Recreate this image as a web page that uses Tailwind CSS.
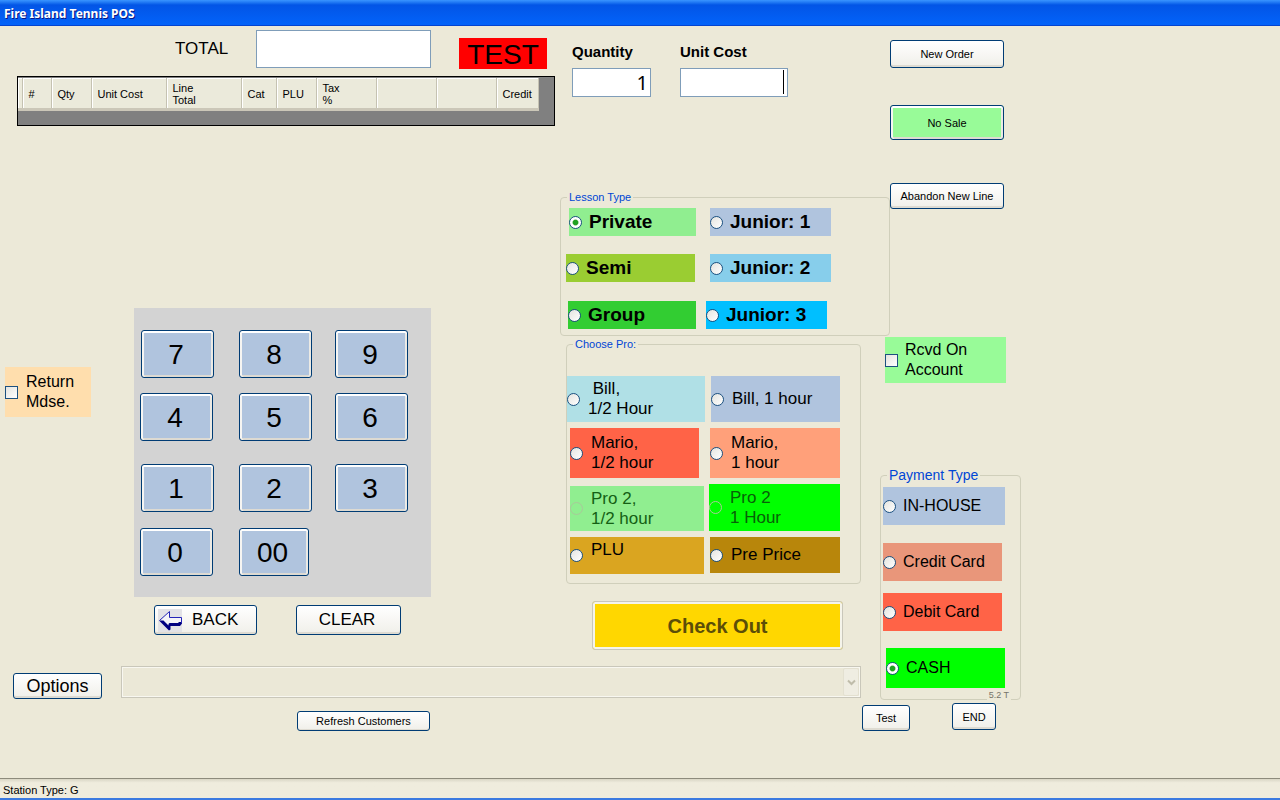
<!DOCTYPE html>
<html lang="en">
<head>
<meta charset="utf-8">
<meta name="viewport" content="width=device-width, initial-scale=1">
<title>Fire Island Tennis POS</title>
<script src="https://cdn.jsdelivr.net/npm/@tailwindcss/browser@4"></script>
</head>
<body class="flex min-h-screen flex-col bg-[#ece9d8] font-['Liberation_Sans',Arial,sans-serif] text-[11px] leading-[14px] text-black">

<header class="flex h-[26px] items-center bg-linear-to-b from-[#3a95ff] via-[#0355e6] via-20% to-[#0363fa] border-b border-[#0444d0] px-1 pt-0.5">
  <h1 class="font-['Noto_Sans','Open_Sans',sans-serif] text-[12px] font-bold text-white text-shadow-[1px_1px_0_#0a1883]">Fire Island Tennis POS</h1>
</header>

<main class="flex flex-1 items-start">
  <!-- Sale entry -->
  <div class="w-[862px] shrink-0">
    <div class="flex items-start">
      <section class="w-[560px] shrink-0">
        <div class="flex h-[50px] items-start pt-1 pl-[175px]">
          <label for="total" class="w-[81px] pt-[9px] text-[17px] leading-5">TOTAL</label>
          <input id="total" type="text" class="h-[38px] w-[175px] border border-[#7f9db9] bg-white px-1 text-right text-[20px]">
          <div class="mt-2 ml-7 flex h-[31px] w-[88px] items-center justify-center bg-[#ff0000] pt-0.5 text-[28px] leading-8">TEST</div>
        </div>

        <div class="ml-[17px] h-[50px] w-[538px] border border-black bg-[#808080] pt-px">
          <table class="w-[520px] table-fixed border-collapse bg-[#ebeadb]">
            <colgroup>
              <col class="w-[4px]"><col class="w-[29px]"><col class="w-[40px]"><col class="w-[75px]"><col class="w-[75px]"><col class="w-[35px]"><col class="w-[40px]"><col class="w-[60px]"><col class="w-[60px]"><col class="w-[60px]"><col class="w-[42px]">
            </colgroup>
            <thead>
              <tr class="h-[31px] border-t border-b-3 border-t-white border-b-[#cbc7b8] text-left leading-3 *:border-r *:border-r-[#c5c2b2] *:pl-1.5 *:font-normal *:shadow-[inset_1px_0_0_#fff]">
                <td></td><th scope="col">#</th><th scope="col">Qty</th><th scope="col">Unit Cost</th><th scope="col">Line<br>Total</th><th scope="col">Cat</th><th scope="col">PLU</th><th scope="col">Tax<br>%</th><td></td><td></td><th scope="col">Credit</th>
              </tr>
            </thead>
          </table>
        </div>

        <div class="mt-[182px] flex items-start">
          <label class="mt-[59px] ml-[5px] flex h-[50px] w-[86px] items-center gap-2 bg-[#ffdead] text-[16px] leading-5">
            <input type="checkbox" class="size-[13px] shrink-0 appearance-none border border-[#1c5180] bg-linear-to-br from-[#e4e4df] to-white">
            <span>Return<br>Mdse.</span>
          </label>
          <div class="ml-[43px] h-[289px] w-[297px] bg-[#d3d3d3] pt-[22px] text-[28px] [&_button]:h-[48px] [&_button]:rounded-[3px] [&_button]:border [&_button]:border-[#003c74] [&_button]:bg-[#b0c4de] [&_button]:pt-0.5 [&_button]:pr-[3px] [&_button]:shadow-[inset_0_2px_0_#fff,inset_2px_0_0_#f6f5f2,inset_-2px_0_0_#eceae4,inset_0_-2px_0_#dddad2]">
            <div class="flex pl-[7px]">
              <button type="button" class="w-[73px]">7</button><button type="button" class="ml-[25px] w-[73px]">8</button><button type="button" class="ml-[23px] w-[73px]">9</button>
            </div>
            <div class="mt-[15px] flex pl-[6px]">
              <button type="button" class="w-[73px]">4</button><button type="button" class="ml-[26px] w-[73px]">5</button><button type="button" class="ml-[23px] w-[73px]">6</button>
            </div>
            <div class="mt-[23px] flex pl-[7px]">
              <button type="button" class="w-[73px]">1</button><button type="button" class="ml-[25px] w-[73px]">2</button><button type="button" class="ml-[23px] w-[73px]">3</button>
            </div>
            <div class="mt-4 flex pl-[6px]">
              <button type="button" class="w-[73px]">0</button><button type="button" class="ml-[26px] w-[70px]">00</button>
            </div>
          </div>
        </div>

        <div class="mt-2 flex pl-[154px] text-[17px] leading-5">
          <button type="button" class="flex h-[30px] w-[103px] items-center gap-2.5 rounded-[3px] border border-[#003c74] bg-linear-to-b from-white to-[#f0efe9] pl-[3px] shadow-[inset_0_-2px_0_#dedbd2]">
            <svg class="h-[23px] w-6 shrink-0" viewBox="0 0 24 23" aria-hidden="true">
              <path fill="#e2e2e6" d="M0 0h24v23H0z"/>
              <path fill="#f4f4f8" d="M1.500 12 11.500 2v6.500h12V15h-12v5.500z"/>
              <path fill="#000080" d="M1 11.500 11 21.500l1.500-1V17H22l2-2.500V13h-3l-1 1h-8.500l-1 1v1.500L5.500 11.500z"/>
              <path fill="none" stroke="#2424b8" d="M1.500 11.500 11.500 2.500v6h12V14"/>
            </svg>
            BACK
          </button>
          <button type="button" class="ml-[39px] h-[30px] w-[105px] rounded-[3px] border border-[#003c74] bg-linear-to-b from-white to-[#f0efe9] pr-[3px] shadow-[inset_0_-2px_0_#dedbd2]">CLEAR</button>
        </div>
      </section>

      <section class="-mr-[28px] w-[330px] shrink-0">
        <div class="flex pt-4 pl-3 text-[15px] leading-5">
          <div class="w-[108px]">
            <label for="qty" class="block h-[26px] font-bold">Quantity</label>
            <input id="qty" type="text" value="1" class="h-[29px] w-[79px] border border-[#7f9db9] bg-white px-0.5 text-right font-['Noto_Sans',sans-serif] text-[20px]">
          </div>
          <div>
            <label for="cost" class="block h-[26px] font-bold">Unit Cost</label>
            <div class="relative">
              <input id="cost" type="text" class="block h-[29px] w-[108px] border border-[#7f9db9] bg-white px-1 text-right text-[18px]">
              <span class="absolute top-0.5 right-1 h-6 w-px bg-black"></span>
            </div>
          </div>
        </div>

        <fieldset class="mt-[93px] h-[146px] rounded-[4px] border border-[#d0cfbb] text-[19px] font-bold leading-6 [&_input]:size-[13px] [&_input]:shrink-0 [&_input]:appearance-none [&_input]:rounded-full [&_input]:border [&_input]:border-[#1c5180] [&_input]:bg-linear-to-br [&_input]:from-[#e4e4df] [&_input]:to-white [&_label]:flex [&_label]:h-7 [&_label]:items-center [&_label]:gap-[7px]">
          <legend class="ml-1.5 px-0.5 text-[11px] font-normal leading-[14px] text-[#0046d5]">Lesson Type</legend>
          <div class="mt-1 flex pl-2">
            <label class="w-[127px] bg-[#90ee90]"><input type="radio" name="lesson" checked class="checked:bg-radial checked:from-[#21a121] checked:from-30% checked:to-white checked:to-45%">Private</label>
            <label class="ml-3.5 w-[121px] bg-[#b0c4de]"><input type="radio" name="lesson">Junior: 1</label>
          </div>
          <div class="mt-[18px] flex pl-[5px]">
            <label class="w-[129px] bg-[#9acd32]"><input type="radio" name="lesson">Semi</label>
            <label class="ml-[15px] w-[121px] bg-[#87ceeb]"><input type="radio" name="lesson">Junior: 2</label>
          </div>
          <div class="mt-[19px] flex pl-[7px]">
            <label class="w-[128px] bg-[#32cd32]"><input type="radio" name="lesson">Group</label>
            <label class="ml-2.5 w-[121px] bg-[#00bfff]"><input type="radio" name="lesson">Junior: 3</label>
          </div>
        </fieldset>

        <fieldset class="mt-px ml-1.5 h-[247px] w-[295px] rounded-[4px] border border-[#d0cfbb] text-[17px] leading-5 [&_input]:size-[13px] [&_input]:shrink-0 [&_input]:appearance-none [&_input]:rounded-full [&_input]:border [&_input]:border-[#1c5180] [&_input]:bg-linear-to-br [&_input]:from-[#e4e4df] [&_input]:to-white [&_label]:flex [&_label]:items-center [&_label]:gap-2">
          <legend class="ml-1.5 px-0.5 text-[11px] leading-[14px] text-[#0046d5]">Choose Pro:</legend>
          <div class="mt-[25px] flex">
            <label class="h-[46px] w-[138px] bg-[#b0e0e6]"><input type="radio" name="pro"><span>&nbsp;Bill,<br>1/2 Hour</span></label>
            <label class="ml-1.5 h-[46px] w-[129px] bg-[#b0c4de]"><input type="radio" name="pro">Bill, 1 hour</label>
          </div>
          <div class="mt-1.5 flex pl-[3px]">
            <label class="h-[50px] w-[129px] bg-[#ff6347]"><input type="radio" name="pro"><span>Mario,<br>1/2 hour</span></label>
            <label class="ml-[11px] h-[50px] w-[130px] bg-[#ffa07a]"><input type="radio" name="pro"><span>Mario,<br>1 hour</span></label>
          </div>
          <div class="mt-1.5 flex items-end pl-[3px] [&_input:disabled]:border-[#a9c99a] [&_input:disabled]:bg-none">
            <label class="h-[45px] w-[134px] bg-[#90ee90] text-[#146014]"><input type="radio" name="pro" disabled><span>Pro 2,<br>1/2 hour</span></label>
            <label class="ml-[5px] h-[47px] w-[131px] bg-[#00ff00] text-[#086008]"><input type="radio" name="pro" disabled><span>Pro 2<br>1 Hour</span></label>
          </div>
          <div class="mt-1.5 flex pl-[3px]">
            <label class="h-[37px] w-[134px] bg-[#daa520]"><input type="radio" name="pro"><span class="self-start pt-[3px]">PLU</span></label>
            <label class="ml-1.5 h-9 w-[130px] bg-[#b8860b]"><input type="radio" name="pro">Pre Price</label>
          </div>
        </fieldset>

        <button type="button" class="mt-[17px] ml-8 h-[49px] w-[251px] rounded-[3px] border border-[#c9c7ba] bg-[#ffd700] text-[20px] font-bold text-[#5c4e08] shadow-[inset_0_0_0_2px_#f5f4ea]">Check Out</button>
      </section>
    </div>

    <div class="mt-4 flex items-start">
      <button type="button" class="mt-[7px] ml-[13px] h-[26px] w-[89px] rounded-[3px] border border-[#003c74] bg-linear-to-b from-white to-[#f0efe9] text-[18px] leading-5 shadow-[inset_0_-2px_0_#dedbd2]">Options</button>
      <div class="relative ml-[19px] w-[740px]">
        <select disabled aria-label="Customer" class="block h-[32px] w-full appearance-none border border-[#c9c7ba] bg-[#ebe8d7] shadow-[inset_0_0_0_1px_#f8f7f0]"><option></option></select>
        <span class="pointer-events-none absolute top-0.5 right-0.5 bottom-0.5 flex w-4 items-center justify-center rounded-[2px] border border-[#e3e0d0] bg-[#efede2]">
          <svg class="h-[7px] w-[9px]" viewBox="0 0 9 7" aria-hidden="true"><path d="m1 1.500 3.500 3.500L8 1.500" fill="none" stroke="#bfbcaa" stroke-width="2"/></svg>
        </span>
      </div>
    </div>
    <button type="button" class="mt-3 ml-[297px] block h-5 w-[133px] rounded-[3px] border border-[#003c74] bg-linear-to-b from-white to-[#f0efe9] shadow-[inset_0_-1px_0_#dedbd2]">Refresh Customers</button>
  </div>

  <!-- Order actions and payment -->
  <aside class="w-[160px] shrink-0 pt-3.5">
    <div class="ml-7 flex w-[114px] flex-col [&_button]:rounded-[3px] [&_button]:border [&_button]:border-[#003c74]">
      <button type="button" class="h-7 bg-linear-to-b from-white to-[#f0efe9] shadow-[inset_0_-2px_0_#dedbd2]">New Order</button>
      <button type="button" class="mt-[37px] h-[35px] bg-[#98fb98] shadow-[inset_0_2px_0_#fff,inset_2px_0_0_#f6f5f2,inset_-2px_0_0_#eceae4,inset_0_-2px_0_#dddad2]">No Sale</button>
      <button type="button" class="mt-[43px] h-[26px] bg-linear-to-b from-white to-[#f0efe9] shadow-[inset_0_-2px_0_#dedbd2]">Abandon New Line</button>
    </div>

    <label class="mt-32 ml-[23px] flex h-[46px] w-[121px] items-center gap-[7px] bg-[#98fb98] text-[16px] leading-5">
      <input type="checkbox" class="size-[13px] shrink-0 appearance-none border border-[#1c5180] bg-linear-to-br from-[#e4e4df] to-white">
      <span>Rcvd On<br>Account</span>
    </label>

    <div class="relative mt-[84px] ml-[18px] w-[141px]">
      <fieldset class="h-[233px] rounded-[4px] border border-[#d0cfbb] text-[16px] leading-5 [&_input]:size-[13px] [&_input]:shrink-0 [&_input]:appearance-none [&_input]:rounded-full [&_input]:border [&_input]:border-[#1c5180] [&_input]:bg-linear-to-br [&_input]:from-[#e4e4df] [&_input]:to-white [&_label]:flex [&_label]:items-center [&_label]:gap-[7px]">
        <legend class="ml-1.5 px-0.5 text-[14px] leading-4 text-[#0046d5]">Payment Type</legend>
        <div class="flex flex-col pt-1 pl-0.5">
          <label class="h-[38px] w-[122px] bg-[#b0c4de]"><input type="radio" name="pay">IN-HOUSE</label>
          <label class="mt-[18px] h-[38px] w-[119px] bg-[#e9967a]"><input type="radio" name="pay">Credit Card</label>
          <label class="mt-3 h-[38px] w-[119px] bg-[#ff6347]"><input type="radio" name="pay">Debit Card</label>
          <label class="mt-[17px] ml-[3px] h-10 w-[119px] bg-[#00ff00]"><input type="radio" name="pay" checked class="checked:bg-radial checked:from-[#21a121] checked:from-30% checked:to-white checked:to-45%">CASH</label>
        </div>
      </fieldset>
      <span class="absolute right-2.5 -bottom-px bg-[#ece9d8] px-0.5 text-[9px] leading-3 text-[#76746a]">5.2 T</span>
    </div>

    <div class="mt-[3px] flex items-start [&_button]:rounded-[3px] [&_button]:border [&_button]:border-[#003c74] [&_button]:bg-linear-to-b [&_button]:from-white [&_button]:to-[#f0efe9] [&_button]:shadow-[inset_0_-2px_0_#dedbd2]">
      <button type="button" class="mt-0.5 h-[26px] w-12">Test</button>
      <button type="button" class="ml-[42px] h-[27px] w-11">END</button>
    </div>
  </aside>
</main>

<footer class="flex h-[22px] items-center border-t border-b-2 border-t-[#8d8b7c] border-b-[#3b7ae0] bg-linear-to-b from-[#d9d6c5] to-[#efecdd] to-20% px-[3px] pt-0.5">Station Type: G</footer>
</body>
</html>
